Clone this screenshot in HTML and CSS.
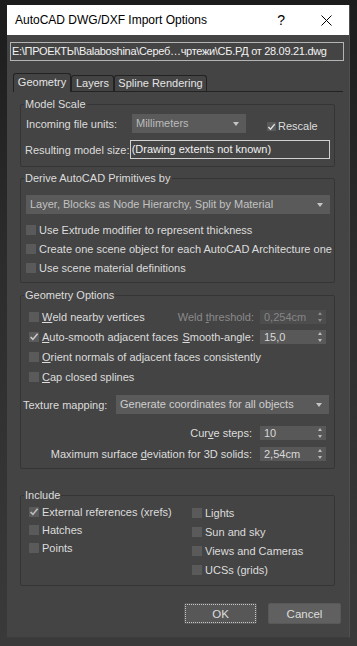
FILE: index.html
```html
<!DOCTYPE html>
<html>
<head>
<meta name="viewport" content="width=device-width, initial-scale=1">
<link rel="stylesheet" href="styles.css">
</head>

<body>
<div class="window">
  <div class="titlebar">
    <span class="title">AutoCAD DWG/DXF Import Options</span>
    <span class="help">?</span>
    <svg class="close" width="11" height="11" viewBox="0 0 11 11"><path d="M0.5 0.5 L10.5 10.5 M10.5 0.5 L0.5 10.5" stroke="#000" stroke-width="1" fill="none"/></svg>
  </div>

  <div class="path">E:\ПРОЕКТЫ\Balaboshina\Сереб…чртежи\СБ.РД от 28.09.21.dwg</div>

  <div class="tabs">
    <div class="tab active tab-geom">Geometry</div>
    <div class="tab tab-layers">Layers</div>
    <div class="tab tab-spline">Spline Rendering</div>
  </div>

  <div class="page">
    <fieldset class="group scale">
      <legend>Model Scale</legend>
      <div class="row scale-units">
        <span class="lbl units-lbl">Incoming file units:</span>
        <div class="select units-select">Millimeters<span class="arrow"></span></div>
        <label class="check rescale"><span class="box on"><svg width="10" height="10" viewBox="0 0 10 10"><path d="M1.6 5 L3.9 7.4 L8.6 1.8" stroke="#e2e2e2" stroke-width="1.6" fill="none"/></svg></span>Rescale</label>
      </div>
      <div class="row scale-size">
        <span class="lbl size-lbl">Resulting model size:</span>
        <div class="field">(Drawing extents not known)</div>
      </div>
    </fieldset>

    <fieldset class="group derive">
      <legend>Derive AutoCAD Primitives by</legend>
      <div class="select wide">Layer, Blocks as Node Hierarchy, Split by Material<span class="arrow"></span></div>
      <div class="checks">
        <label class="check"><span class="box"></span>Use Extrude modifier to represent thickness</label>
        <label class="check"><span class="box"></span>Create one scene object for each AutoCAD Architecture one</label>
        <label class="check"><span class="box"></span>Use scene material definitions</label>
      </div>
    </fieldset>

    <fieldset class="group geom">
      <legend>Geometry Options</legend>
      <div class="geom-row">
        <label class="check"><span class="box"></span><u>W</u>eld nearby vertices</label>
        <span class="spin-lbl disabled">Weld <u>t</u>hreshold:</span>
        <div class="spinner off">0,254cm<span class="updown"></span></div>
      </div>
      <div class="geom-row">
        <label class="check"><span class="box on"><svg width="10" height="10" viewBox="0 0 10 10"><path d="M1.6 5 L3.9 7.4 L8.6 1.8" stroke="#c9c9c9" stroke-width="1.6" fill="none"/></svg></span><u>A</u>uto-smooth adjacent faces</label>
        <span class="spin-lbl"><u>S</u>mooth-angle:</span>
        <div class="spinner">15,0<span class="updown"></span></div>
      </div>
      <div class="geom-row">
        <label class="check"><span class="box"></span><u>O</u>rient normals of adjacent faces consistently</label>
      </div>
      <div class="geom-row">
        <label class="check"><span class="box"></span><u>C</u>ap closed splines</label>
      </div>

      <div class="texture">
        <span class="tex-lbl">Texture mapping:</span>
        <div class="select tex-select">Generate coordinates for all objects<span class="arrow"></span></div>
      </div>
      <div class="row num curve">
        <span class="spin-lbl">Cur<u>v</u>e steps:</span>
        <div class="spinner">10<span class="updown"></span></div>
      </div>
      <div class="row num deviation">
        <span class="spin-lbl">Maximum surface <u>d</u>eviation for 3D solids:</span>
        <div class="spinner">2,54cm<span class="updown"></span></div>
      </div>
    </fieldset>

    <fieldset class="group include">
      <legend>Include</legend>
      <div class="inc-cols">
        <div class="inc-left">
          <label class="check"><span class="box on"><svg width="10" height="10" viewBox="0 0 10 10"><path d="M1.6 5 L3.9 7.4 L8.6 1.8" stroke="#bdbdbd" stroke-width="1.6" fill="none"/></svg></span>External references (xrefs)</label>
          <label class="check"><span class="box"></span>Hatches</label>
          <label class="check"><span class="box"></span>Points</label>
        </div>
        <div class="inc-right">
          <label class="check"><span class="box"></span>Lights</label>
          <label class="check"><span class="box"></span>Sun and sky</label>
          <label class="check"><span class="box"></span>Views and Cameras</label>
          <label class="check"><span class="box"></span>UCSs (grids)</label>
        </div>
      </div>
    </fieldset>
  </div>

  <div class="buttons">
    <button class="btn ok">OK</button>
    <button class="btn">Cancel</button>
  </div>
</div>
</body>
</html>
```

FILE: styles.css
```css
body {
    margin: 0;
    background: linear-gradient(#1c1c1c, #2c2c2c 40%, #3a3a3a);
    height: 646px;
    font-family: "Liberation Sans", Arial, sans-serif;
    font-size: 11px;
    color: #dcdcdc;
}

.window {
    margin: 5px 0 0 7px;
    width: 343px;
    height: 633px;
    background: #444444;
    border-right: 1px solid #4f4f4f;
    border-bottom: 1px solid #3c3c3c;
    box-sizing: border-box;
    display: flex;
    flex-direction: column;
}

/* title bar */
.titlebar {
    height: 30px;
    background: #ffffff;
    color: #000;
    display: flex;
    align-items: center;
    padding-left: 8px;
    font-size: 12px;
}
.title { flex: 1; }
.help {
    font-size: 14px;
    margin-right: 36px;
    margin-top: -1px;
}
.close { margin-right: 17px; }

.path {
    margin: 7px 5px 0 3px;
    height: 19px;
    box-sizing: border-box;
    border: 1px solid #b4b4b4;
    padding-left: 1px;
    line-height: 17px;
    color: #f2f2f2;
    letter-spacing: -0.3px;
    white-space: nowrap;
    overflow: hidden;
}

/* tabs */
.tabs {
    margin: 12px 6px 0 6px;
    height: 19px;
    box-sizing: border-box;
    border-bottom: 1px solid #232323;
    display: flex;
    align-items: flex-end;
}
.tab {
    height: 16px;
    box-sizing: border-box;
    border: 1px solid #222;
    border-bottom: none;
    border-radius: 3px 3px 0 0;
    text-align: center;
    line-height: 15px;
    color: #e4e4e4;
}
.tab.active {
    height: 19px;
    margin-bottom: -1px;
    background: #444444;
    line-height: 17px;
}
.tab-geom { width: 58px; }
.tab-layers { width: 43px; }
.tab-spline { width: 93px; }

/* group boxes */
.page {
    padding: 5px 14px 0 13px;
}
.group {
    margin: 0;
    padding: 0 4px 0 5px;
    border: 1px solid #353535;
    border-radius: 2px;
    min-width: 0;
}
.group legend {
    margin-left: -2px;
    padding: 0 1px;
    line-height: 14px;
}
.derive { margin-top: 4px; }
.geom { margin-top: 5px; }
.include { margin-top: 19px; }

.scale { padding-top: 3px; padding-bottom: 7px; }
.derive { padding-top: 10px; padding-bottom: 5px; }
.geom { padding-top: 5px; padding-bottom: 7px; }
.include { padding-top: 1px; padding-bottom: 6px; }

.row {
    display: flex;
    align-items: center;
}
.scale-units { height: 19px; }
.scale-size { height: 19px; margin-top: 7px; }
.units-lbl { width: 106px; }
.size-lbl { width: 105px; margin-left: -1px; }

.select {
    position: relative;
    height: 19px;
    box-sizing: border-box;
    background: #5a5a5a;
    color: #bcbcbc;
    line-height: 19px;
    padding-left: 4px;
    white-space: nowrap;
}
.arrow {
    position: absolute;
    right: 7px;
    top: 8px;
    border-left: 3.5px solid transparent;
    border-right: 3.5px solid transparent;
    border-top: 4px solid #c4c4c4;
}
.units-select { width: 114px; }
.wide { width: 304px; color: #c2c2c2; }
.tex-select { color: #cfcfcf; }

.field {
    width: 201px;
    height: 19px;
    box-sizing: border-box;
    border: 1px solid #d0d0d0;
    line-height: 17px;
    padding-left: 1px;
    color: #f0f0f0;
}

/* checkboxes */
.check {
    display: flex;
    align-items: center;
    white-space: nowrap;
}
.box {
    width: 10px;
    height: 10px;
    background: #5a5a5a;
    margin-right: 3px;
    flex: none;
    display: flex;
}
.rescale { margin-left: 21px; margin-top: 5px; }
.rescale .box { width: 9px; height: 9px; margin-right: 2px; }

.checks { margin-top: 6px; }
.checks .check { height: 19px; }

.geom-row {
    display: flex;
    align-items: center;
    height: 20px;
}
.geom-row .check { margin-left: 3px; flex: 1; }

.spin-lbl { margin-right: 6px; }
.disabled { color: #8a8a8a; }
.spinner {
    position: relative;
    width: 66px;
    height: 14px;
    box-sizing: border-box;
    background: #585858;
    color: #d8d8d8;
    line-height: 14px;
    padding-left: 4px;
    margin-right: 4px;
}
.spinner.off { background: #4d4d4d; color: #858585; }
.updown {
    position: absolute;
    right: 3px;
    top: 2px;
    width: 5px;
    height: 10px;
}
.updown::before, .updown::after {
    content: "";
    position: absolute;
    left: 0;
    border-left: 2.5px solid transparent;
    border-right: 2.5px solid transparent;
}
.updown::before { top: 0; border-bottom: 3px solid #bdbdbd; }
.updown::after { bottom: 0; border-top: 3px solid #bdbdbd; }
.off .updown::before { border-bottom-color: #8a8a8a; }
.off .updown::after { border-top-color: #8a8a8a; }

u { text-underline-offset: 1px; }

.texture {
    display: grid;
    grid-template-columns: 93px 213px;
    align-items: center;
    width: 306px;
    height: 19px;
    margin: 8px 0 0 -3px;
}
.num { justify-content: flex-end; height: 14px; }
.num .spin-lbl { margin-right: 8px; }
.curve { margin-top: 12px; }
.deviation { margin-top: 7px; }

.inc-cols { display: flex; }
.inc-left { width: 163px; padding-left: 3px; }
.inc-left .check { height: 18px; }
.inc-right .check { height: 19px; }

/* dialog buttons */
.buttons {
    display: flex;
    justify-content: flex-end;
    gap: 11px;
    margin: 17px 8px 0 0;
}
.btn {
    width: 73px;
    height: 21px;
    background: #606060;
    border: 1px solid #585858;
    border-radius: 2px;
    color: #dedede;
    font-family: "Liberation Sans", Arial, sans-serif;
    font-size: 11.5px;
    padding: 0;
}
.btn.ok {
    background: #575757;
    outline: 1px dotted #c8c8c8;
    outline-offset: -2px;
}
```
